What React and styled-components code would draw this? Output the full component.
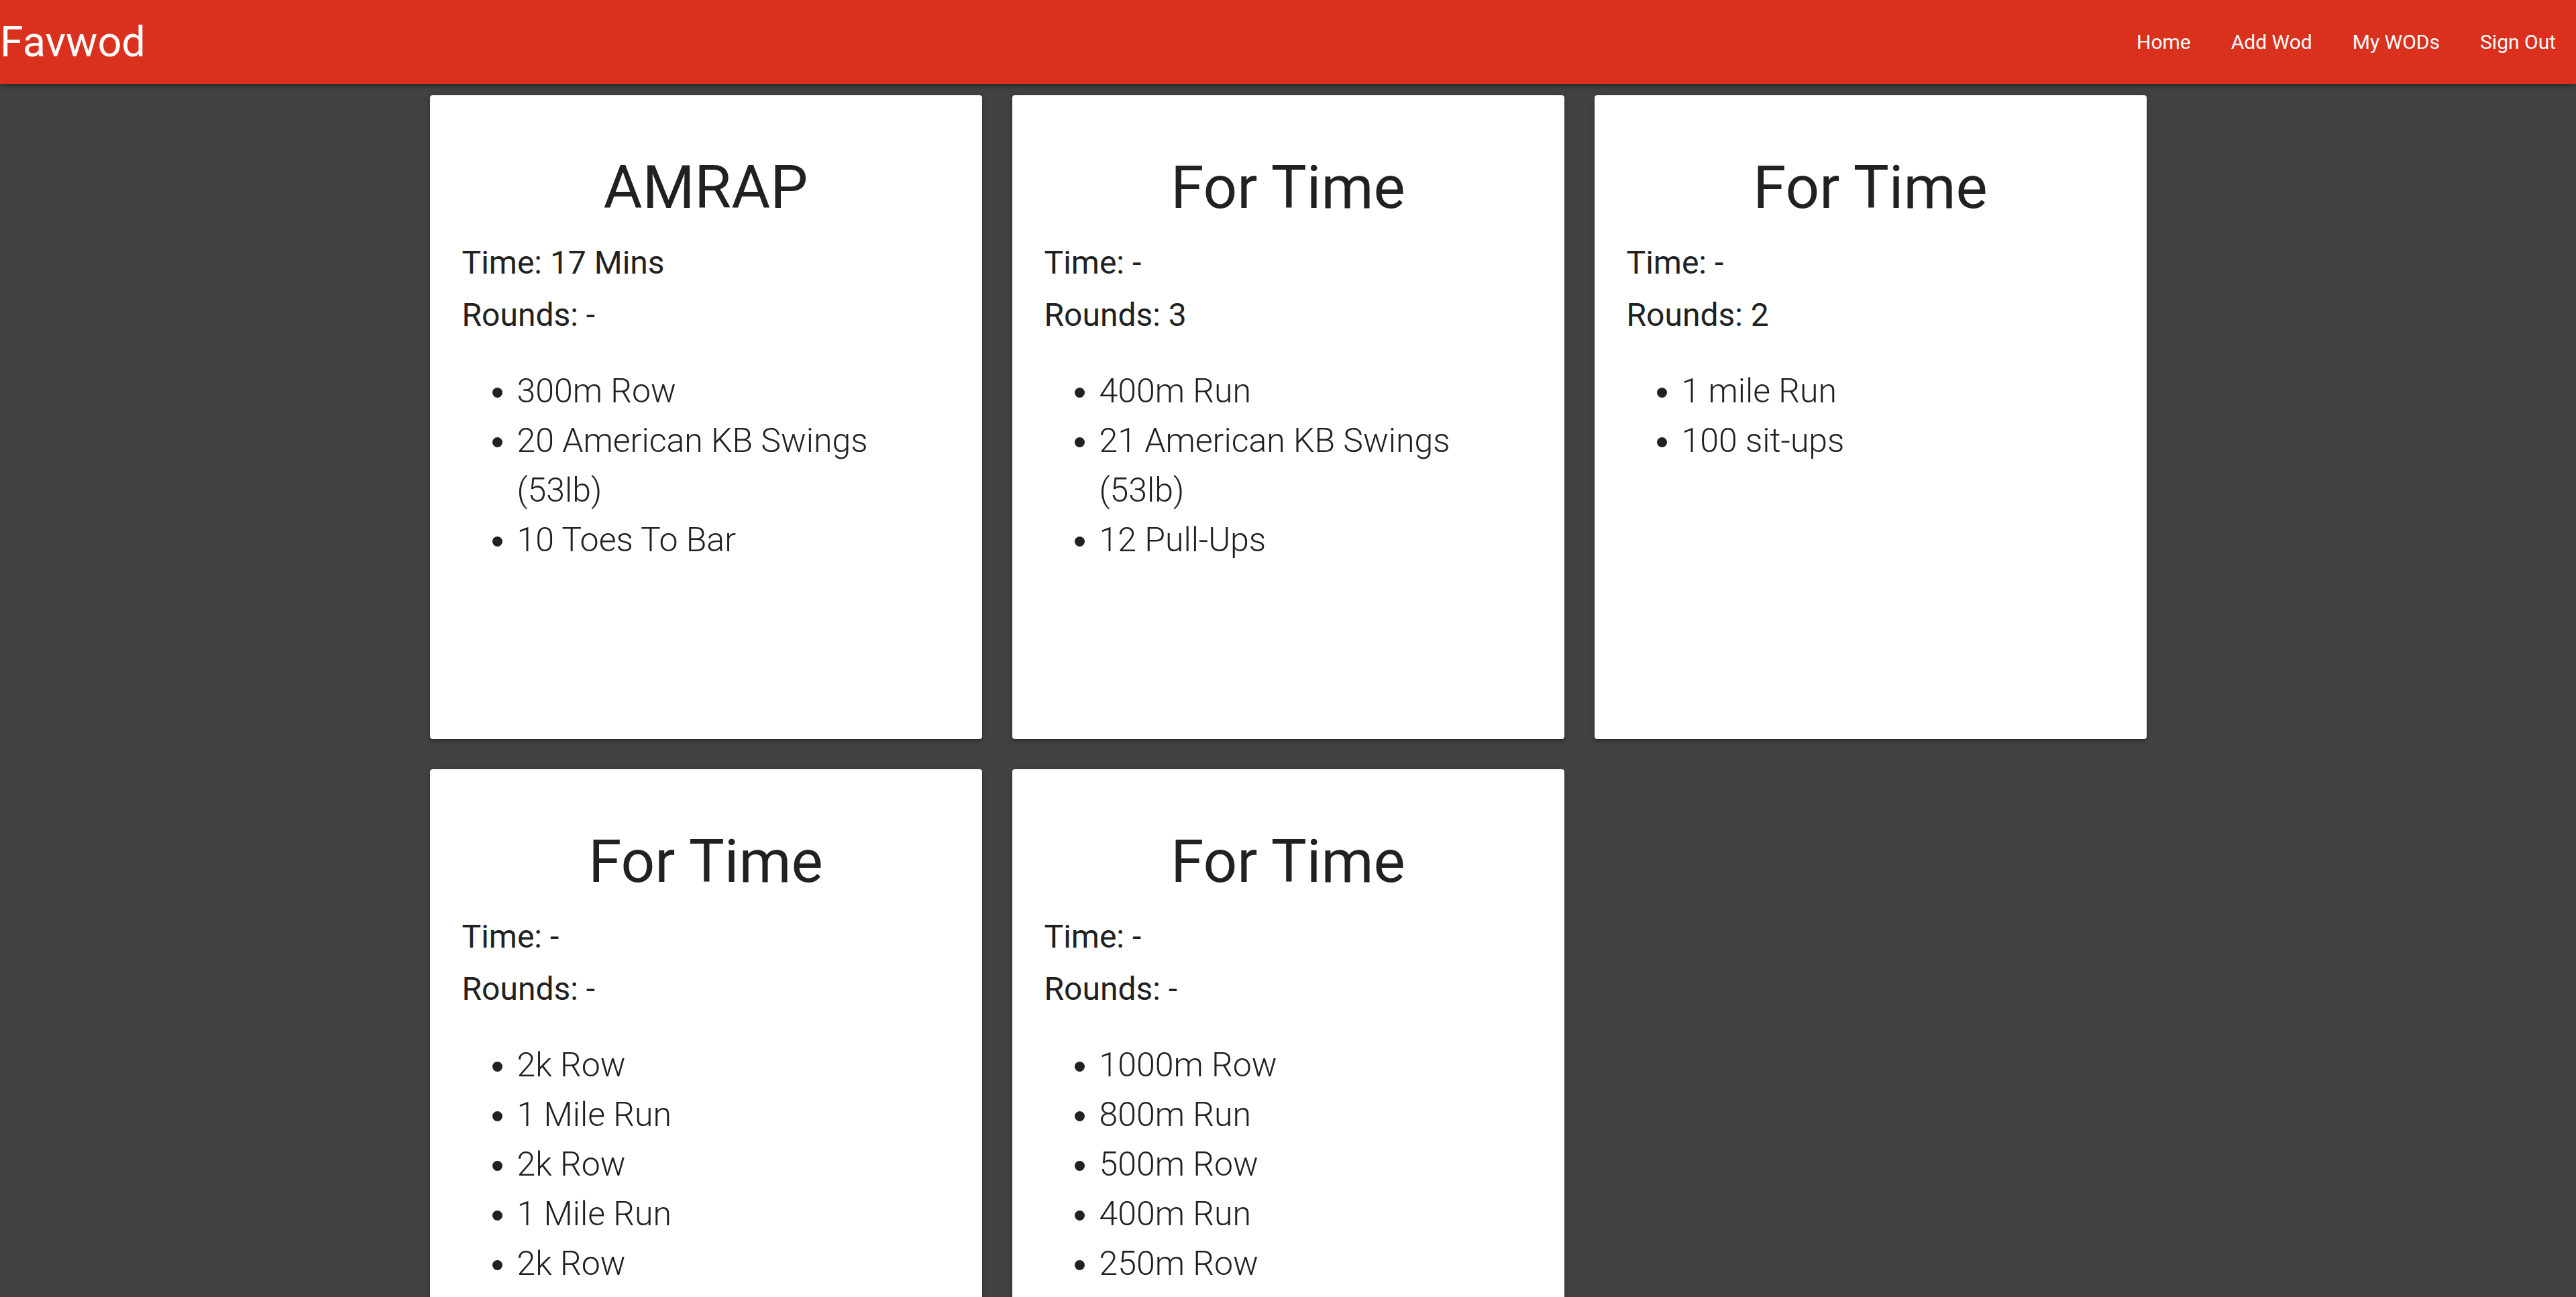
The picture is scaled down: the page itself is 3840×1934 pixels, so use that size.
import React from "react";
import styled, { createGlobalStyle } from "styled-components";

const wods = [
    {
        type: "AMRAP",
        time: "17 Mins",
        rounds: "-",
        moves: ["300m Row", "20 American KB Swings (53lb)", "10 Toes To Bar"],
    },
    {
        type: "For Time",
        time: "-",
        rounds: "3",
        moves: ["400m Run", "21 American KB Swings (53lb)", "12 Pull-Ups"],
    },
    {
        type: "For Time",
        time: "-",
        rounds: "2",
        moves: ["1 mile Run", "100 sit-ups"],
    },
    {
        type: "For Time",
        time: "-",
        rounds: "-",
        moves: ["2k Row", "1 Mile Run", "2k Row", "1 Mile Run", "2k Row", "1 Mile Run"],
    },
    {
        type: "For Time",
        time: "-",
        rounds: "-",
        moves: ["1000m Row", "800m Run", "500m Row", "400m Run", "250m Row", "100m Run"],
    },
];

const links = ["Home", "Add Wod", "My WODs", "Sign Out"];

export default function App() {
    return (
        <>
            <GlobalStyle />
            <Navbar>
                <Brand>Favwod</Brand>
                <NavLinks>
                    {links.map((l) => (
                        <NavLink key={l} href="#">
                            {l}
                        </NavLink>
                    ))}
                </NavLinks>
            </Navbar>
            <CardGrid>
                {wods.map((w, i) => (
                    <WodCard key={i}>
                        <WodTitle>{w.type}</WodTitle>
                        <InfoLine>Time: {w.time}</InfoLine>
                        <InfoLine>Rounds: {w.rounds}</InfoLine>
                        <MoveList>
                            {w.moves.map((m, j) => (
                                <Move key={j}>{m}</Move>
                            ))}
                        </MoveList>
                    </WodCard>
                ))}
            </CardGrid>
        </>
    );
}

const GlobalStyle = createGlobalStyle`
    html, body {
        margin: 0;
        padding: 0;
        background: #424242;
        font-family: Roboto, "Noto Sans", "Liberation Sans", sans-serif;
        color: #212121;
    }
    * {
        box-sizing: border-box;
    }
`;

const Navbar = styled.nav`
    height: 125px;
    background-color: #da301e;
    display: flex;
    align-items: center;
    justify-content: space-between;
    box-shadow: 0 4px 4px 0 rgba(0, 0, 0, 0.14), 0 6px 2px -4px rgba(0, 0, 0, 0.12),
        0 2px 10px 0 rgba(0, 0, 0, 0.2);
    position: relative;
    z-index: 2;
`;

const Brand = styled.a`
    color: #ffffff;
    font-size: 63px;
    line-height: 122px;
    font-weight: 400;
    text-decoration: none;
`;

const NavLinks = styled.ul`
    display: flex;
    margin: 0;
    padding: 0;
    list-style: none;
`;

const NavLink = styled.a`
    display: block;
    padding: 0 30px;
    color: #ffffff;
    font-size: 30px;
    line-height: 125px;
    text-decoration: none;
`;

const CardGrid = styled.main`
    width: 2559px;
    margin: 17px auto 0;
    display: grid;
    grid-template-columns: repeat(3, 1fr);
    column-gap: 45px;
    row-gap: 45px;
`;

const WodCard = styled.section`
    height: 960px;
    background: #ffffff;
    border-radius: 4px;
    padding: 48px;
    overflow: hidden;
    box-shadow: 0 4px 4px 0 rgba(0, 0, 0, 0.14), 0 6px 2px -4px rgba(0, 0, 0, 0.12),
        0 2px 10px 0 rgba(0, 0, 0, 0.2);
`;

const WodTitle = styled.h2`
    margin: 36px 0 0;
    font-size: 89px;
    line-height: 107px;
    font-weight: 400;
    text-align: center;
    color: #212121;
`;

const InfoLine = styled.p`
    margin: 0;
    font-size: 48px;
    line-height: 78px;
    font-weight: 400;
    &:first-of-type {
        margin-top: 20px;
    }
`;

const MoveList = styled.ul`
    margin: 37px 0 0;
    padding-left: 82px;
    list-style: disc;
`;

const Move = styled.li`
    font-size: 50px;
    line-height: 74px;
    font-weight: 300;
`;
